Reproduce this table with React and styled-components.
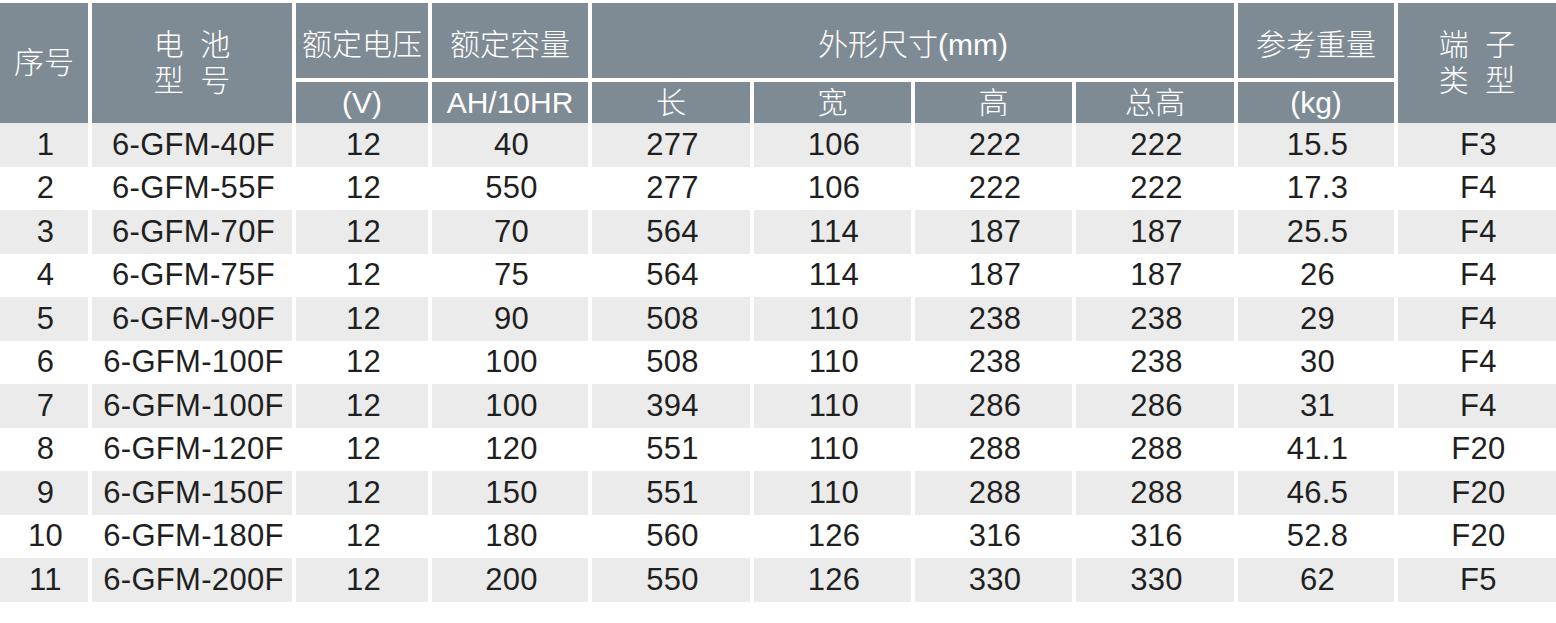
import React from 'react';
import styled, { createGlobalStyle } from 'styled-components';

const headGrey = '#7f8b94';
const rowGrey = '#ebebeb';
const cols = '88px 200px 132px 156px 158px 157px 157px 158px 156px 158px';

const GlobalStyle = createGlobalStyle`
  html, body {
    margin: 0;
    padding: 0;
    background: #fff;
  }
  body {
    font-family: 'Liberation Sans', 'Noto Sans CJK SC', Arial, sans-serif;
  }
`;

const Table = styled.div`
  width: 1556px;
  padding-top: 3px;
`;

const Head = styled.div`
  display: grid;
  grid-template-columns: ${cols};
  grid-template-rows: 75px 41px;
  column-gap: 4px;
  row-gap: 4px;
`;

const HeadCell = styled.div`
  background: ${headGrey};
  color: #fff;
  font-size: 30px;
  font-weight: 300;
  font-family: 'Liberation Sans', 'Noto Sans CJK SC', sans-serif;
  display: flex;
  flex-direction: column;
  align-items: center;
  justify-content: center;
  line-height: 36px;
  white-space: pre;
  word-spacing: 8px;
  grid-column: ${({ $col }) => $col || 'auto'};
  grid-row: ${({ $row }) => $row || 'auto'};
  padding-top: ${({ $drop }) => ($drop ? `${$drop}px` : '0')};
`;

const Body = styled.div`
  display: grid;
  grid-template-columns: ${cols};
  column-gap: 4px;
`;

const Row = styled.div`
  display: contents;
`;

const Cell = styled.div`
  height: 43.5px;
  background: ${({ $striped }) => ($striped ? rowGrey : '#fff')};
  color: #1f1f1f;
  font-size: 31px;
  letter-spacing: 0.3px;
  display: flex;
  align-items: center;
  justify-content: center;
  padding-left: 3px;
`;

const rows = [
  ['1', '6-GFM-40F', '12', '40', '277', '106', '222', '222', '15.5', 'F3'],
  ['2', '6-GFM-55F', '12', '550', '277', '106', '222', '222', '17.3', 'F4'],
  ['3', '6-GFM-70F', '12', '70', '564', '114', '187', '187', '25.5', 'F4'],
  ['4', '6-GFM-75F', '12', '75', '564', '114', '187', '187', '26', 'F4'],
  ['5', '6-GFM-90F', '12', '90', '508', '110', '238', '238', '29', 'F4'],
  ['6', '6-GFM-100F', '12', '100', '508', '110', '238', '238', '30', 'F4'],
  ['7', '6-GFM-100F', '12', '100', '394', '110', '286', '286', '31', 'F4'],
  ['8', '6-GFM-120F', '12', '120', '551', '110', '288', '288', '41.1', 'F20'],
  ['9', '6-GFM-150F', '12', '150', '551', '110', '288', '288', '46.5', 'F20'],
  ['10', '6-GFM-180F', '12', '180', '560', '126', '316', '316', '52.8', 'F20'],
  ['11', '6-GFM-200F', '12', '200', '550', '126', '330', '330', '62', 'F5'],
];

const App = () => (
  <>
    <GlobalStyle />
    <Table>
      <Head>
        <HeadCell $col="1" $row="1 / span 2">序号</HeadCell>
        <HeadCell $col="2" $row="1 / span 2">
          <span>电 池</span>
          <span>型 号</span>
        </HeadCell>
        <HeadCell $col="3" $row="1" $drop={8}>额定电压</HeadCell>
        <HeadCell $col="4" $row="1" $drop={8}>额定容量</HeadCell>
        <HeadCell $col="5 / span 4" $row="1" $drop={8}>外形尺寸(mm)</HeadCell>
        <HeadCell $col="9" $row="1" $drop={8}>参考重量</HeadCell>
        <HeadCell $col="10" $row="1 / span 2">
          <span>端 子</span>
          <span>类 型</span>
        </HeadCell>
        <HeadCell $col="3" $row="2">(V)</HeadCell>
        <HeadCell $col="4" $row="2">AH/10HR</HeadCell>
        <HeadCell $col="5" $row="2">长</HeadCell>
        <HeadCell $col="6" $row="2">宽</HeadCell>
        <HeadCell $col="7" $row="2">高</HeadCell>
        <HeadCell $col="8" $row="2">总高</HeadCell>
        <HeadCell $col="9" $row="2">(kg)</HeadCell>
      </Head>
      <Body>
        {rows.map((r, i) => (
          <Row key={r[0]}>
            {r.map((v, j) => (
              <Cell key={j} $striped={i % 2 === 0}>
                {v}
              </Cell>
            ))}
          </Row>
        ))}
      </Body>
    </Table>
  </>
);

export default App;
